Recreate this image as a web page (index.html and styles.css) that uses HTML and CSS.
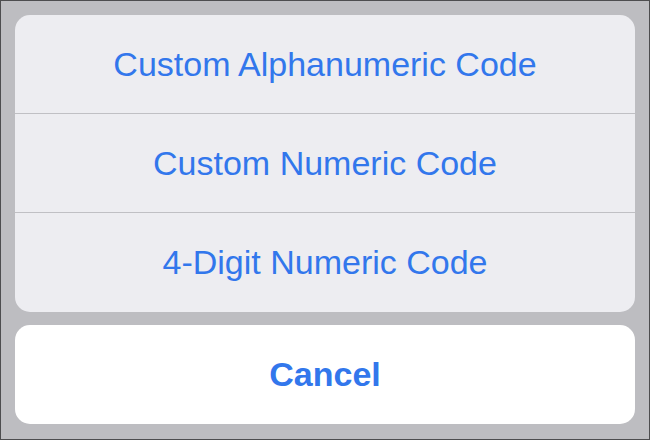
FILE: index.html
```html
<!DOCTYPE html>
<html>
<head>
<meta charset="utf-8">
<link rel="stylesheet" href="styles.css">
</head>
<body>
<div class="frame">
  <div class="sheet">
    <div class="group">
      <div class="action">Custom Alphanumeric Code</div>
      <div class="action">Custom Numeric Code</div>
      <div class="action">4-Digit Numeric Code</div>
    </div>
    <div class="cancel">Cancel</div>
  </div>
</div>
</body>
</html>
```
FILE: styles.css
```css
html, body {
  margin: 0;
  padding: 0;
}
body {
  width: 650px;
  height: 440px;
  overflow: hidden;
  font-family: "Liberation Sans", Arial, sans-serif;
}
.frame {
  box-sizing: border-box;
  width: 650px;
  height: 440px;
  background: #bdbdc1;
  border: 1px solid #4d4d4f;
  padding: 14px 14px 0 14px;
}
.sheet {
  display: flex;
  flex-direction: column;
  gap: 13px;
  width: 620px;
}
.group {
  background: #ededf1;
  border-radius: 15px;
  overflow: hidden;
  display: flex;
  flex-direction: column;
}
.action {
  height: 98px;
  display: flex;
  align-items: center;
  justify-content: center;
  color: #3277ec;
  font-size: 34px;
  border-bottom: 1px solid #c0c0c4;
}
.action:last-child {
  border-bottom: none;
  height: 99px;
}
.cancel {
  height: 99px;
  background: #ffffff;
  border-radius: 15px;
  display: flex;
  align-items: center;
  justify-content: center;
  color: #3277ec;
  font-size: 34px;
  font-weight: bold;
}
```
